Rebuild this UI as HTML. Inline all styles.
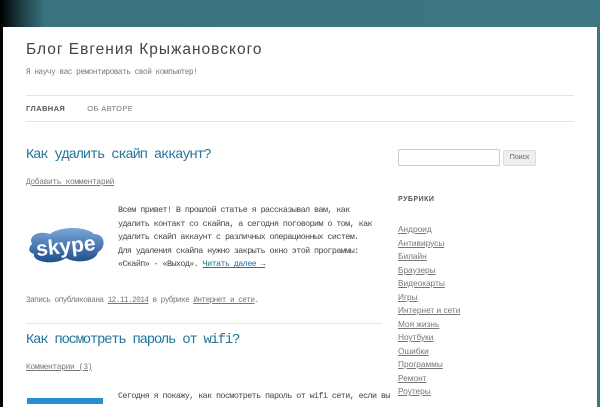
<!DOCTYPE html>
<html><head><meta charset="utf-8"><style>
*{margin:0;padding:0;box-sizing:border-box}
body{width:600px;height:400px;overflow:hidden;position:relative;background:linear-gradient(90deg,#000 0,#1c3a40 20px,#3a7480 45px,#3c7682 100%);font-family:"Liberation Mono",monospace}
.page{position:absolute;left:3px;top:27px;width:594px;height:380px;background:#fff}
.a{position:absolute;white-space:nowrap}
.t{font-family:"Liberation Sans",sans-serif;font-size:15.5px;color:#444;letter-spacing:1px;left:23px;top:14px}
.sub{font-size:7.8px;letter-spacing:-.5px;color:#777;left:23px;top:42px}
.hl{position:absolute;left:23px;width:548px;height:1px;background:#e4e4e4}
.nav{font-family:"Liberation Sans",sans-serif;font-size:7.5px;left:23px;top:77px;letter-spacing:.4px}
.h{font-size:14px;letter-spacing:-1.3px;color:#21759b;left:23px}
.s{font-size:8px;letter-spacing:-.4px;color:#777;text-decoration:underline}
.p{font-size:8.4px;letter-spacing:-.57px;color:#444;left:115px;line-height:13.6px}
.p a{color:#21759b}
.side{font-size:8.3px;color:#777;left:395px;line-height:13.5px;font-family:"Liberation Sans",sans-serif}
.side div{text-decoration:underline}
</style></head><body>
<div class="page">
<div class="a t">Блог Евгения Крыжановского</div>
<div class="a sub">Я научу вас ремонтировать свой компьютер!</div>
<div class="hl" style="top:68px"></div>
<div class="a nav"><b style="color:#555">ГЛАВНАЯ</b><span style="color:#777;margin-left:22px">ОБ АВТОРЕ</span></div>
<div class="hl" style="top:94px"></div>
<div class="a h" style="top:120px">Как удалить скайп аккаунт?</div>
<div class="a s" style="left:23px;top:151px">Добавить комментарий </div>
<svg class="a" style="left:23px;top:197px" width="80" height="42" viewBox="0 0 80 42">
<defs><linearGradient id="g" x1="0" y1="0" x2="0" y2="1"><stop offset="0" stop-color="#7aa6d8"/><stop offset="1" stop-color="#1e4f8c"/></linearGradient></defs>
<path d="M6 20C2 12 12 6 24 10C34 2 60 2 68 10C80 10 80 24 72 28C70 38 50 40 40 34C28 42 6 38 8 30C2 28 2 24 6 20Z" fill="url(#g)"/>
<text x="40" y="29" font-family="Liberation Sans" font-weight="bold" font-size="21" fill="#fff" text-anchor="middle" transform="rotate(-6 40 24)">skype</text>
</svg>
<div class="a p" style="top:177px">Всем привет! В прошлой статье я рассказывал вам, как<br>удалить контакт со скайпа, а сегодня поговорим о том, как<br>удалить скайп аккаунт с различных операционных систем.<br>Для удаления скайпа нужно закрыть окно этой программы:<br>«Скайп» - «Выход». <a href="#">Читать далее →</a></div>
<div class="a" style="left:23px;top:270px;font-size:7.8px;letter-spacing:-.6px;color:#777">Запись опубликована <u>12.11.2014</u> в рубрике <u>Интернет и сети</u>.</div>
<div class="hl" style="top:296px;width:356px"></div>
<div class="a h" style="top:305px">Как посмотреть пароль от wifi?</div>
<div class="a s" style="left:23px;top:336px">Комментарии (3)</div>
<div class="a p" style="top:363px">Сегодня я покажу, как посмотреть пароль от wifi сети, если вы</div>
<div class="a" style="left:24px;top:371px;width:76px;height:6px;background:#2a8fd0"></div>
<div class="a" style="left:395px;top:122px;width:102px;height:17px;border:1px solid #ccc;border-radius:2px"></div>
<div class="a" style="left:500px;top:123px;width:33px;height:16px;background:#eee;border:1px solid #ddd;border-radius:2px;font-family:'Liberation Sans';font-size:7px;color:#666;text-align:center;line-height:14px">Поиск</div>
<div class="a" style="left:395px;top:169px;font-family:'Liberation Sans';font-size:7px;font-weight:bold;color:#555;letter-spacing:.5px">РУБРИКИ</div>
<div class="a side" style="top:196px">
<div>Андроид </div><div>Антивирусы </div><div>Билайн </div><div>Браузеры </div><div>Видеокарты </div><div>Игры </div><div>Интернет и сети </div><div>Моя жизнь </div><div>Ноутбуки </div><div>Ошибки </div><div>Программы </div><div>Ремонт </div><div>Роутеры </div></div>
</div>
</body></html>
